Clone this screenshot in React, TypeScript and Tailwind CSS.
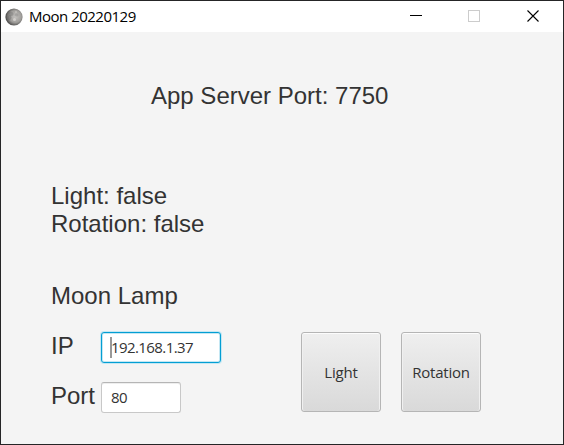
import React from "react";

const heading =
  "font-['Liberation_Sans',Arial,sans-serif] text-[24px] leading-[28px] text-[#333333] whitespace-nowrap";
const ui = "font-['Open_Sans','Noto_Sans',sans-serif] whitespace-nowrap";

function MoonIcon() {
  return (
    <svg width="18" height="18" viewBox="0 0 18 18">
      <defs>
        <radialGradient id="moon" cx="0.58" cy="0.47" r="0.58">
          <stop offset="0" stopColor="#c4c2bf" />
          <stop offset="0.6" stopColor="#a09e9b" />
          <stop offset="1" stopColor="#454443" />
        </radialGradient>
      </defs>
      <circle cx="9" cy="9" r="8.6" fill="url(#moon)" />
      <ellipse cx="6" cy="6" rx="2.600" ry="2" fill="#666" opacity="0.35" />
      <ellipse cx="4.500" cy="9.500" rx="2" ry="2.600" fill="#5c5c5c" opacity="0.35" />
      <ellipse cx="11.500" cy="7" rx="2" ry="1.500" fill="#777" opacity="0.3" />
      <circle cx="9.500" cy="11.500" r="1.500" fill="#dedcd9" opacity="0.7" />
      <circle cx="11" cy="4" r="1.200" fill="#cfcdca" opacity="0.5" />
    </svg>
  );
}

function LampButton({ label }: { label: string }) {
  return (
    <button
      className={`${ui} h-20 w-20 rounded-[3px] border border-[#b5b5b5] bg-linear-to-b from-[#efefef] to-[#d9d9d9] text-[15px] tracking-[-0.2px] text-[#333333] shadow-[inset_0_1px_0_#fcfcfc,inset_1px_0_0_#f0f0f0,inset_-1px_0_0_#f0f0f0]`}
    >
      {label}
    </button>
  );
}

export default function App() {
  return (
    <div className="flex h-[445px] w-[564px] flex-col overflow-hidden border border-[#252526] bg-[#f4f4f4]">
      <header className="flex h-[31px] shrink-0 items-center bg-white pl-1">
        <MoonIcon />
        <span className={`${ui} ml-[6px] pb-[2px] text-[15px] leading-5 tracking-[-0.5px] text-black`}>
          Moon 20220129
        </span>
        <div className="ml-auto flex items-center pr-6 pb-px">
          <svg className="mr-[46px]" width="12" height="12" shapeRendering="crispEdges">
            <path d="M0 5.500H12" stroke="#000" />
          </svg>
          <svg className="mr-[47px]" width="12" height="12" shapeRendering="crispEdges">
            <rect x="0.500" y="0.500" width="11" height="11" fill="none" stroke="#cccccc" />
          </svg>
          <svg width="12" height="12">
            <path d="M0.500 0.500L11.500 11.500M11.500 0.500L0.500 11.500" stroke="#000" strokeWidth="1.1" />
          </svg>
        </div>
      </header>
      <main className="flex flex-col pl-[50px]">
        <h1 className={`${heading} mt-[50px] ml-[100px]`}>App Server Port: 7750</h1>
        <div className={`${heading} mt-[72px]`}>
          <p>Light: false</p>
          <p>Rotation: false</p>
        </div>
        <h2 className={`${heading} mt-[44px]`}>Moon Lamp</h2>
        <div className="mt-[22px] flex">
          <div className="w-[250px]">
            <label className="flex h-[31px] items-start">
              <span className={`${heading} w-[50px]`}>IP</span>
              <span className="flex h-[31px] w-[120px] items-center rounded-[3px] border border-[#039ed3] bg-white pl-2 shadow-[0_0_0_1px_#c4e7f3,inset_0_0_0_1px_#c4e7f3]">
                <span className="h-[21px] w-[2px] bg-[#999999]" />
                <span className={`${ui} -ml-px pb-[2px] text-[15px] leading-5 tracking-[-0.58px] text-[#333333]`}>
                  192.168.1.37
                </span>
              </span>
            </label>
            <label className="mt-[19px] flex h-[31px] items-start">
              <span className={`${heading} w-[50px]`}>Port</span>
              <span className="flex h-[31px] w-20 items-center rounded-[3px] border border-[#c8c8c8] border-t-[#b5b5b5] bg-white pl-[9px] shadow-[inset_0_1px_0_#eeeeee]">
                <span className={`${ui} pb-[2px] text-[15px] leading-5 tracking-[-0.5px] text-[#333333]`}>80</span>
              </span>
            </label>
          </div>
          <div className="flex gap-5">
            <LampButton label="Light" />
            <LampButton label="Rotation" />
          </div>
        </div>
      </main>
    </div>
  );
}
